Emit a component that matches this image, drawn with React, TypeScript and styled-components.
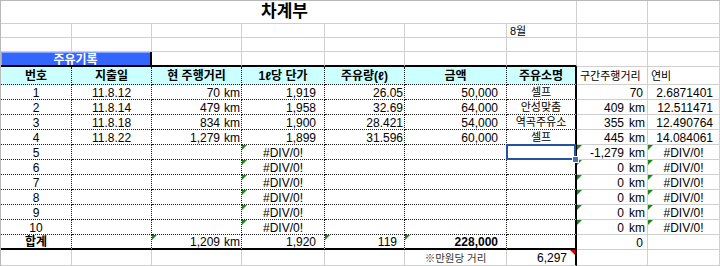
import React from "react";
import styled, { createGlobalStyle } from "styled-components";

const GlobalStyle = createGlobalStyle`
  html, body {
    margin: 0;
    padding: 0;
    background: #fff;
  }
  body {
    font-family: "Liberation Sans", "Noto Sans CJK KR", sans-serif;
    font-size: 12px;
    color: #000;
  }
`;

type Line = "grid" | "dot" | "thick" | "none";
type Align = "left" | "center" | "right";

const edge = (l: Line = "grid") =>
  l === "grid"
    ? "1px solid #cfcfcf"
    : l === "dot"
    ? "1px dotted #1a1a1a"
    : l === "thick"
    ? "2px solid #000"
    : "none";

const Sheet = styled.div`
  display: grid;
  grid-template-columns: 71px 80px 90px 83px 80px 102px 70px 71px 72px;
  grid-template-rows: 23px 14px 14px 15px 18px repeat(10, 15px) 15px 16px;
  width: 720px;
  height: 266px;
  box-sizing: border-box;
  border-top: 1px solid #b8b8b8;
  border-left: 1px solid #b8b8b8;
  overflow: hidden;
`;

const Cell = styled.div<{
  $r?: Line;
  $b?: Line;
  $align?: Align;
  $span?: number;
  $pad?: number;
  $ko?: boolean;
  $bold?: boolean;
}>`
  position: relative;
  box-sizing: border-box;
  display: flex;
  align-items: center;
  justify-content: ${(p) =>
    p.$align === "right" ? "flex-end" : p.$align === "center" ? "center" : "flex-start"};
  padding: 1px ${(p) => p.$pad ?? 2}px 0;
  border-right: ${(p) => edge(p.$r)};
  border-bottom: ${(p) => edge(p.$b)};
  grid-column: span ${(p) => p.$span ?? 1};
  white-space: nowrap;
  line-height: 1;
  font-size: ${(p) => (p.$ko ? "11px" : "12px")};
  font-weight: ${(p) => (p.$bold ? 700 : 400)};
`;

const TitleCell = styled(Cell)`
  font-size: 17px;
  font-weight: 700;
  padding: 0 8px 1px 0;
`;

const BannerCell = styled(Cell)`
  background: #3366ff;
  color: #fff;
  font-weight: 700;
  box-shadow: inset 1px 1px 0 #8aa6ff;
  padding-top: 2px;
`;

const HeadCell = styled(Cell)`
  background: #ccffff;
  font-weight: 700;
`;

const Unit = styled.span<{ $gap: number }>`
  margin-left: ${(p) => p.$gap}px;
`;

const FootNote = styled(Cell)`
  color: #333;
  font-size: 10.5px;
`;

const GreenMark = styled.span`
  position: absolute;
  top: 0;
  left: 0;
  width: 0;
  height: 0;
  border-top: 5px solid #1b8a1b;
  border-right: 5px solid transparent;
`;

const RedMark = styled.span`
  position: absolute;
  top: 0;
  right: 0;
  width: 0;
  height: 0;
  border-top: 5px solid #e00000;
  border-left: 5px solid transparent;
`;

const Selection = styled.span`
  position: absolute;
  top: -1px;
  left: -1px;
  right: -1px;
  bottom: -1px;
  border: 2px solid #24529f;
  z-index: 2;
`;

const Handle = styled.span`
  position: absolute;
  right: -4px;
  bottom: -4px;
  width: 5px;
  height: 5px;
  background: #3f6fc0;
  border: 1px solid #fff;
  z-index: 3;
`;

type Spec = {
  t?: string;
  km?: number; // gap before the "km" unit
  a?: Align;
  pad?: number;
  ko?: boolean;
  bold?: boolean;
  green?: boolean;
  sel?: boolean;
};

const records: Spec[][] = [
  [
    { t: "1", a: "center" },
    { t: "11.8.12", a: "center" },
    { t: "70", km: 4, a: "right", pad: 1 },
    { t: "1,919", a: "right", pad: 8 },
    { t: "26.05", a: "right", pad: 1 },
    { t: "50,000", a: "right", pad: 8 },
    { t: "셀프", a: "center", ko: true },
    { t: "70", a: "right", pad: 4 },
    { t: "2.6871401", a: "right", pad: 6 },
  ],
  [
    { t: "2", a: "center" },
    { t: "11.8.14", a: "center" },
    { t: "479", km: 4, a: "right", pad: 1 },
    { t: "1,958", a: "right", pad: 8 },
    { t: "32.69", a: "right", pad: 1 },
    { t: "64,000", a: "right", pad: 8 },
    { t: "안성맞춤", a: "center", ko: true },
    { t: "409", km: 5, a: "right", pad: 2 },
    { t: "12.511471", a: "right", pad: 6 },
  ],
  [
    { t: "3", a: "center" },
    { t: "11.8.18", a: "center" },
    { t: "834", km: 4, a: "right", pad: 1 },
    { t: "1,900", a: "right", pad: 8 },
    { t: "28.421", a: "right", pad: 1 },
    { t: "54,000", a: "right", pad: 8 },
    { t: "역곡주유소", a: "center", ko: true },
    { t: "355", km: 5, a: "right", pad: 2 },
    { t: "12.490764", a: "right", pad: 6 },
  ],
  [
    { t: "4", a: "center" },
    { t: "11.8.22", a: "center" },
    { t: "1,279", km: 4, a: "right", pad: 1 },
    { t: "1,899", a: "right", pad: 8 },
    { t: "31.596", a: "right", pad: 1 },
    { t: "60,000", a: "right", pad: 8 },
    { t: "셀프", a: "center", ko: true },
    { t: "445", km: 5, a: "right", pad: 2 },
    { t: "14.084061", a: "right", pad: 6 },
  ],
];

const emptyRow = (n: number, dist: string, sel = false): Spec[] => [
  { t: String(n), a: "center" },
  {},
  {},
  { t: "#DIV/0!", a: "center", green: true },
  {},
  {},
  { sel },
  { t: dist, km: 5, a: "right", pad: 2, green: true },
  { t: "#DIV/0!", a: "center", green: true },
];

const rows: Spec[][] = [
  ...records,
  emptyRow(5, "-1,279", true),
  ...[6, 7, 8, 9, 10].map((n) => emptyRow(n, "0")),
  [
    { t: "합계", a: "center", bold: true },
    {},
    { t: "1,209", km: 4, a: "right", pad: 1, green: true },
    { t: "1,920", a: "right", pad: 8 },
    { t: "119", a: "right", pad: 7, green: true },
    { t: "228,000", a: "right", pad: 8, bold: true, green: true },
    {},
    { t: "0", a: "right", pad: 4 },
    {},
  ],
];

const headers = ["번호", "지출일", "현 주행거리", "1ℓ당 단가", "주유량(ℓ)", "금액", "주유소명"];

const tableRight = (col: number): Line => (col === 6 ? "thick" : col > 6 ? "grid" : "dot");

export default function App() {
  return (
    <>
      <GlobalStyle />
      <Sheet>
        {/* title row */}
        <TitleCell $span={7} $align="center">차계부</TitleCell>
        <Cell />
        <Cell />

        {/* blank rows */}
        {[0, 1].map((r) =>
          Array.from({ length: 9 }).map((_, c) => (
            <Cell key={`u${r}-${c}`} $ko $pad={3}>
              {r === 0 && c === 6 ? "8월" : ""}
            </Cell>
          ))
        )}

        {/* banner */}
        <BannerCell $span={2} $align="center" $r="thick" $b="thick">
          주유기록
        </BannerCell>
        {[2, 3, 4, 5, 6].map((c) => (
          <Cell key={`b${c}`} $b="thick" />
        ))}
        <Cell />
        <Cell />

        {/* header */}
        {headers.map((h, c) => (
          <HeadCell key={h} $align="center" $r={tableRight(c)} $b="dot">
            {h}
          </HeadCell>
        ))}
        <Cell $ko $pad={3}>구간주행거리</Cell>
        <Cell $ko $pad={3}>연비</Cell>

        {/* data + total */}
        {rows.map((row, ri) =>
          row.map((s, c) => {
            const isTotal = ri === rows.length - 1;
            const bottom: Line = c > 6 ? "grid" : isTotal ? "thick" : "dot";
            return (
              <Cell
                key={`d${ri}-${c}`}
                $align={s.a}
                $pad={s.pad}
                $ko={s.ko}
                $bold={s.bold}
                $r={tableRight(c)}
                $b={bottom}
                style={s.sel ? { zIndex: 2 } : undefined}
              >
                {s.green && <GreenMark />}
                {s.sel && (
                  <>
                    <Selection />
                    <Handle />
                  </>
                )}
                {s.t}
                {s.km !== undefined && <Unit $gap={s.km}>km</Unit>}
              </Cell>
            );
          })
        )}

        {/* footer row */}
        <Cell />
        <Cell />
        <Cell />
        <Cell />
        <Cell />
        <FootNote $ko $align="center">
          ※만원당 거리
        </FootNote>
        <Cell $align="right" $pad={8} $r="thick">
          <RedMark />
          6,297
        </Cell>
        <Cell />
        <Cell />
      </Sheet>
    </>
  );
}
